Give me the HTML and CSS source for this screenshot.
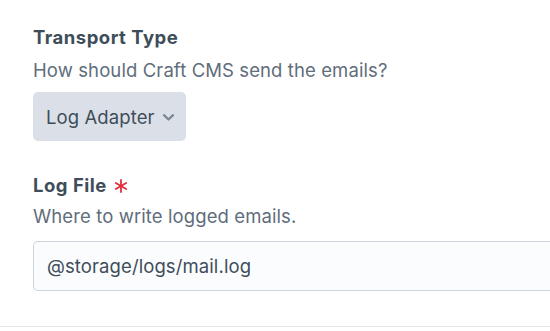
FILE: index.html
```html
<!DOCTYPE html>
<html lang="en">

<head>
    <meta charset="UTF-8">
    <meta name="viewport" content="width=device-width, initial-scale=1.0">
    <title>Mail Settings</title>
    <link rel="stylesheet" href="styles.css">
</head>

<body>

    <div class="settings">
        <div class="field">
            <div class="heading">
                <label for="transport">Transport Type</label>
            </div>
            <div class="instructions">How should Craft CMS send the emails?</div>
            <div class="select" id="transport">
                <span>Log Adapter</span>
                <svg width="13" height="9" viewBox="0 0 13 9">
                    <path d="M2 2.2 L6.5 6.5 L11 2.2" fill="none" stroke="#7b8794" stroke-width="2.3" stroke-linecap="round" stroke-linejoin="round" />
                </svg>
            </div>
        </div>

        <div class="field">
            <div class="heading">
                <label for="logfile">Log File</label>
                <svg class="required" width="14" height="14" viewBox="0 0 14 14">
                    <g stroke="#e12d39" stroke-width="1.8" stroke-linecap="round">
                        <path d="M7 1 L7 13" />
                        <path d="M1.8 4 L12.2 10" />
                        <path d="M1.8 10 L12.2 4" />
                    </g>
                </svg>
            </div>
            <div class="instructions">Where to write logged emails.</div>
            <input id="logfile" class="text" type="text" value="@storage/logs/mail.log">
        </div>
    </div>
    <div class="footer"></div>

</body>

</html>
```

FILE: styles.css
```css
* {
    margin: 0;
    padding: 0;
    box-sizing: border-box;
}

body {
    background-color: #fff;
    font-family: Inter, "Noto Sans", sans-serif;
    color: #3f4d5a;
    overflow: hidden;
}

.settings {
    padding: 25px 0 0 33px;
    height: 326px;
}

.field {
    margin-bottom: 32px;
}

.heading {
    display: flex;
    align-items: center;
    gap: 7px;
    font-size: 18.5px;
    font-weight: 700;
    letter-spacing: 0.5px;
    line-height: 24px;
}

.required {
    margin-top: 1px;
}

.instructions {
    margin-top: 10px;
    font-size: 18.5px;
    letter-spacing: 0.1px;
    line-height: 22px;
    color: #606d7b;
}

.field + .field .instructions {
    margin-top: 8px;
}

.select {
    display: inline-flex;
    align-items: center;
    gap: 7px;
    margin-top: 11px;
    height: 49px;
    padding: 0 11px 0 13px;
    background-color: #dbe0e8;
    border-radius: 5px;
    font-size: 18.5px;
    letter-spacing: 0.1px;
    color: #3f4d5a;
}

.select svg {
    margin-top: 2px;
}

.text {
    display: block;
    width: 100%;
    height: 50px;
    margin-top: 14px;
    padding: 0 13px;
    border: 1px solid #cdd4de;
    border-right: none;
    border-radius: 5px 0 0 5px;
    background-color: #fbfcfe;
    font-family: inherit;
    font-size: 18.5px;
    letter-spacing: 0.1px;
    color: #3f4d5a;
    outline: none;
}

.footer {
    height: 5px;
    border-top: 1px solid #e3e5e8;
}
```
